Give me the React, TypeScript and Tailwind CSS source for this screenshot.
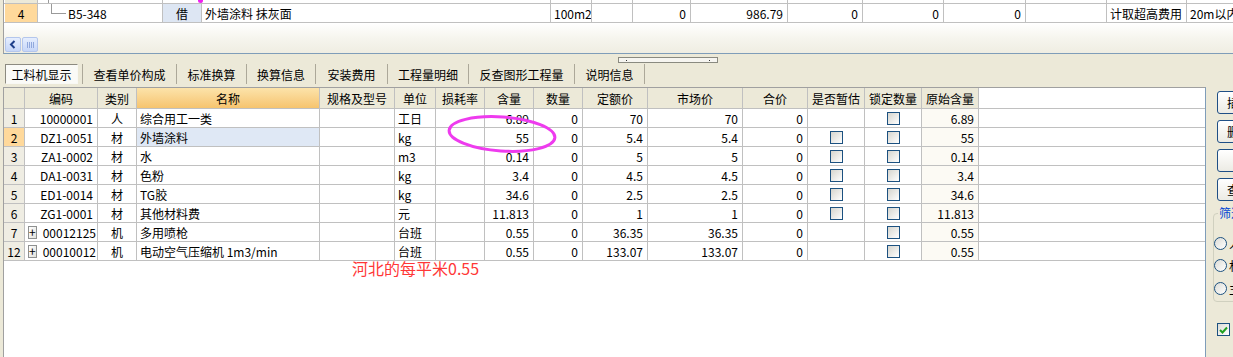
import React from "react";

type Align = "l" | "c" | "r";

const COLS: { w: string; a: Align; head: string; orange?: boolean }[] = [
  { w: "w-[21px]", a: "c", head: "" },
  { w: "w-[73px]", a: "r", head: "编码" },
  { w: "w-[39px]", a: "c", head: "类别" },
  { w: "w-[183px]", a: "l", head: "名称", orange: true },
  { w: "w-[75px]", a: "l", head: "规格及型号" },
  { w: "w-[41px]", a: "l", head: "单位" },
  { w: "w-[49px]", a: "r", head: "损耗率" },
  { w: "w-[49px]", a: "r", head: "含量" },
  { w: "w-[49px]", a: "r", head: "数量" },
  { w: "w-[65px]", a: "r", head: "定额价" },
  { w: "w-[95px]", a: "r", head: "市场价" },
  { w: "w-[65px]", a: "r", head: "合价" },
  { w: "w-[57px]", a: "c", head: "是否暂估" },
  { w: "w-[57px]", a: "c", head: "锁定数量" },
  { w: "w-[57px]", a: "r", head: "原始含量" },
];

interface Row {
  no: string;
  code: string;
  plus?: boolean;
  cat: string;
  name: string;
  unit: string;
  qty: string;
  price: string;
  market: string;
  est: boolean;
  orig: string;
}

const ROWS: Row[] = [
  { no: "1", code: "10000001", cat: "人", name: "综合用工一类", unit: "工日", qty: "6.89", price: "70", market: "70", est: false, orig: "6.89" },
  { no: "2", code: "DZ1-0051", cat: "材", name: "外墙涂料", unit: "kg", qty: "55", price: "5.4", market: "5.4", est: true, orig: "55" },
  { no: "3", code: "ZA1-0002", cat: "材", name: "水", unit: "m3", qty: "0.14", price: "5", market: "5", est: true, orig: "0.14" },
  { no: "4", code: "DA1-0031", cat: "材", name: "色粉", unit: "kg", qty: "3.4", price: "4.5", market: "4.5", est: true, orig: "3.4" },
  { no: "5", code: "ED1-0014", cat: "材", name: "TG胶", unit: "kg", qty: "34.6", price: "2.5", market: "2.5", est: true, orig: "34.6" },
  { no: "6", code: "ZG1-0001", cat: "材", name: "其他材料费", unit: "元", qty: "11.813", price: "1", market: "1", est: true, orig: "11.813" },
  { no: "7", code: "00012125", plus: true, cat: "机", name: "多用喷枪", unit: "台班", qty: "0.55", price: "36.35", market: "36.35", est: false, orig: "0.55" },
  { no: "12", code: "00010012", plus: true, cat: "机", name: "电动空气压缩机 1m3/min", unit: "台班", qty: "0.55", price: "133.07", market: "133.07", est: false, orig: "0.55" },
];

const TABS: { label: string; w: string }[] = [
  { label: "工料机显示", w: "w-[78px]" },
  { label: "查看单价构成", w: "w-[94px]" },
  { label: "标准换算", w: "w-[70px]" },
  { label: "换算信息", w: "w-[69px]" },
  { label: "安装费用", w: "w-[72px]" },
  { label: "工程量明细", w: "w-[81px]" },
  { label: "反查图形工程量", w: "w-[106px]" },
  { label: "说明信息", w: "w-[70px]" },
];

const alignCls = (a: Align) =>
  a === "l" ? "justify-start pl-[3px]" : a === "c" ? "justify-center" : "justify-end pr-[4px]";

function Check() {
  return <span className="block w-[13px] h-[13px] border border-[#1C5180] bg-linear-to-br from-[#D6D5CE] to-white" />;
}

function PlusBox() {
  return (
    <span className="flex items-center justify-center w-[13px] h-[13px] border border-[#8E9090] bg-linear-to-br from-white to-[#E2E2DC] text-[12px] leading-none mr-[6px]">
      +
    </span>
  );
}

function TopFrame() {
  const cells: { w: string; a: Align; v: string; cls?: string }[] = [
    { w: "w-[33px]", a: "c", v: "4", cls: "bg-[#FFD99B]" },
    { w: "w-[125px]", a: "l", v: "tree" },
    { w: "w-[39px]", a: "c", v: "借", cls: "bg-[#DDE6F3]" },
    { w: "w-[349px]", a: "l", v: "外墙涂料 抹灰面" },
    { w: "w-[41px]", a: "l", v: "100m2" },
    { w: "w-[41px]", a: "l", v: "" },
    { w: "w-[58px]", a: "r", v: "0" },
    { w: "w-[97px]", a: "r", v: "986.79" },
    { w: "w-[75px]", a: "r", v: "0" },
    { w: "w-[81px]", a: "r", v: "0" },
    { w: "w-[82px]", a: "r", v: "0" },
    { w: "w-[81px]", a: "r", v: "" },
    { w: "w-[80px]", a: "l", v: "计取超高费用" },
    { w: "w-[60px]", a: "l", v: "20m以内" },
  ];
  return (
    <div className="ml-[3px] h-[54px] bg-white border-l border-b border-l-[#A0A0A0] border-b-[#7F9DB9] flex flex-col">
      <div className="flex h-[4px] pl-[1px] border-b border-[#C0C0C0]">
        {cells.map((c, i) => (
          <div key={i} className={`${c.w} shrink-0 border-r border-[#C0C0C0] ${i === 0 ? "bg-[#ECE9D8]" : ""}`}>
            {c.v === "tree" && <div className="ml-[10px] w-px h-full bg-[#9A9A9A]" />}
          </div>
        ))}
      </div>
      <div className="flex h-[19px] pl-[1px] border-b border-[#C0C0C0]">
        {cells.map((c, i) => (
          <div
            key={i}
            className={`${c.w} shrink-0 border-r border-[#C0C0C0] flex items-center ${alignCls(c.a)} ${c.cls ?? ""} overflow-hidden whitespace-nowrap`}
          >
            {c.v === "tree" ? (
              <div className="flex items-center h-full pl-[7px]">
                <div className="relative w-[16px] h-full">
                  <div className="absolute left-[3px] top-0 w-px h-[9px] bg-[#9A9A9A]" />
                  <div className="absolute left-[3px] top-[9px] w-[15px] h-px bg-[#9A9A9A]" />
                </div>
                <span className="ml-[4px]">B5-348</span>
              </div>
            ) : (
              c.v
            )}
          </div>
        ))}
      </div>
      <div className="flex-1 bg-linear-to-b from-white via-[#F6F5EE] to-[#EFEDE2] flex items-end pl-[1px] pb-px">
        <div className="w-[16px] h-[15px] rounded-[2px] border border-[#B4C6EC] bg-linear-to-b from-[#E6EEFE] to-[#C6D6F8] flex items-center justify-center">
          <svg width="8" height="9" viewBox="0 0 8 9">
            <path d="M5.5 1 L2 4.5 L5.5 8" stroke="#1E3F8A" strokeWidth="2" fill="none" />
          </svg>
        </div>
        <div className="ml-px w-[16px] h-[15px] rounded-[2px] border border-[#B4C6EC] bg-linear-to-b from-[#E6EEFE] to-[#C6D6F8] flex items-center justify-center gap-px">
          <span className="w-px h-[6px] bg-[#90A8DC]" />
          <span className="w-px h-[6px] bg-[#90A8DC]" />
          <span className="w-px h-[6px] bg-[#90A8DC]" />
          <span className="w-px h-[6px] bg-[#90A8DC]" />
        </div>
      </div>
    </div>
  );
}

function Tabs() {
  return (
    <div className="flex h-[22px] items-center pl-[5px]">
      {TABS.map((t, i) => (
        <div key={t.label} className={`${t.w} shrink-0 h-[20px] flex items-center border-r border-[#ACA899]`}>
          {i === 0 ? (
            <div className="w-[73px] h-[20px] flex items-center justify-center bg-[#FAFAF7] border-t border-l border-t-[#8C8A80] border-l-[#8C8A80] border-r border-b border-r-[#F8F8F4] border-b-[#F8F8F4] whitespace-nowrap">
              {t.label}
            </div>
          ) : (
            <div className="w-full text-center whitespace-nowrap">{t.label}</div>
          )}
        </div>
      ))}
    </div>
  );
}

function Grid() {
  return (
    <div className="relative ml-[3px] w-[1203px] shrink-0 h-full bg-white border-l border-t border-r border-l-[#A0A0A0] border-t-[#A0A0A0] border-r-[#7F9DB9] overflow-hidden">
      <div className="flex h-[21px] border-b border-[#C0C0C0]">
        {COLS.map((c, i) => (
          <div
            key={i}
            className={`${c.w} shrink-0 border-r border-[#C0C0C0] flex items-center justify-center whitespace-nowrap ${
              c.orange ? "bg-linear-to-b from-[#FCE3AA] to-[#F6C46E]" : "bg-[#ECE9D8]"
            }`}
          >
            {c.head}
          </div>
        ))}
      </div>
      {ROWS.map((r) => {
        const vals: React.ReactNode[] = [
          r.no,
          <span className="flex items-center w-full pl-[3px]">
            {r.plus && <PlusBox />}
            <span className="ml-auto">{r.code}</span>
          </span>,
          r.cat,
          r.name,
          "",
          r.unit,
          "",
          r.qty,
          "0",
          r.price,
          r.market,
          "0",
          r.est ? <Check /> : "",
          <Check />,
          r.orig,
        ];
        return (
          <div key={r.no} className="flex h-[19px] border-b border-[#C0C0C0]">
            {COLS.map((c, i) => {
              let bg = "";
              if (i === 0) bg = r.no === "2" ? "bg-[#FFD99B]" : "bg-[#EFEDE3]";
              if (i === 3 && r.no === "2") bg = "bg-[#DFE8F5]";
              if (i === 14) bg = "bg-[#FCFAF4]";
              return (
                <div
                  key={i}
                  className={`${c.w} shrink-0 border-r border-[#C0C0C0] flex items-center whitespace-nowrap overflow-hidden ${alignCls(c.a)} ${bg}`}
                >
                  {vals[i]}
                </div>
              );
            })}
          </div>
        );
      })}
      <svg className="absolute left-[439px] top-[25px]" width="120" height="42" viewBox="0 0 120 42">
        <ellipse cx="59" cy="21" rx="53" ry="17" fill="none" stroke="#EE3BEE" strokeWidth="3" transform="rotate(4 59 21)" />
      </svg>
      <div className="absolute left-[348px] top-[171px] text-[16px] leading-[18px] text-[#FF3737] whitespace-nowrap">河北的每平米0.55</div>
    </div>
  );
}

function Radio({ label }: { label: string }) {
  return (
    <div className="flex items-center h-[22.5px] whitespace-nowrap">
      <span className="block w-[13px] h-[13px] rounded-full border border-[#1C5180] bg-linear-to-br from-[#DCDCD6] to-white shrink-0" />
      <span className="ml-[2px]">{label}</span>
    </div>
  );
}

function SidePanel() {
  const btns = ["插入", "删除", "", "查询"];
  return (
    <div className="flex-1 flex flex-col pl-[11px] pt-[4px] overflow-hidden">
      {btns.map((b, i) => (
        <div
          key={i}
          className="shrink-0 w-[64px] h-[23px] mb-[6px] rounded-[3px] border border-[#1F4F86] bg-linear-to-b from-white to-[#ECEBE4] flex items-center pl-[9px] whitespace-nowrap"
        >
          {b}
        </div>
      ))}
      <div className="relative shrink-0 mt-[6px] ml-[-4px] w-[70px] h-[89px] rounded-[4px] border border-[#D0D0BF] pt-[18px]">
        <span className="absolute -top-[9px] left-[4px] px-px bg-[#ECE9D8] text-[#0046D5] leading-[16px]">筛选</span>
        <Radio label="人工" />
        <Radio label="材料" />
        <Radio label="主材" />
      </div>
      <div className="mt-[18px] flex items-center whitespace-nowrap">
        <span className="flex items-center justify-center w-[13px] h-[13px] border border-[#1C5180] bg-linear-to-br from-[#DCDCD6] to-white shrink-0">
          <svg width="9" height="8" viewBox="0 0 9 8">
            <path d="M1 4 L3.5 6.5 L8 1.5" stroke="#21A121" strokeWidth="2" fill="none" />
          </svg>
        </span>
        <span className="ml-[8px]">显示</span>
      </div>
    </div>
  );
}

export default function App() {
  return (
    <div className="w-[1233px] h-[357px] bg-[#ECE9D8] overflow-hidden flex flex-col text-[12px] leading-[19px] text-black font-['Noto_Sans_CJK_SC',sans-serif]">
      <div className="relative">
        <TopFrame />
        <div className="absolute left-[198px] top-0 w-[5px] h-[3px] rounded-b-full bg-[#F020F0]" />
      </div>
      <div className="ml-[618px] mt-[3px] w-[100px] h-[6px] border border-[#8A8A80] bg-[#F6F5F0] flex items-center justify-between px-[7px]">
        <span className="w-px h-px bg-[#333]" />
        <span className="w-px h-px bg-[#333]" />
      </div>
      <Tabs />
      <div className="flex flex-1 mt-[2px] min-h-0">
        <Grid />
        <SidePanel />
      </div>
    </div>
  );
}
